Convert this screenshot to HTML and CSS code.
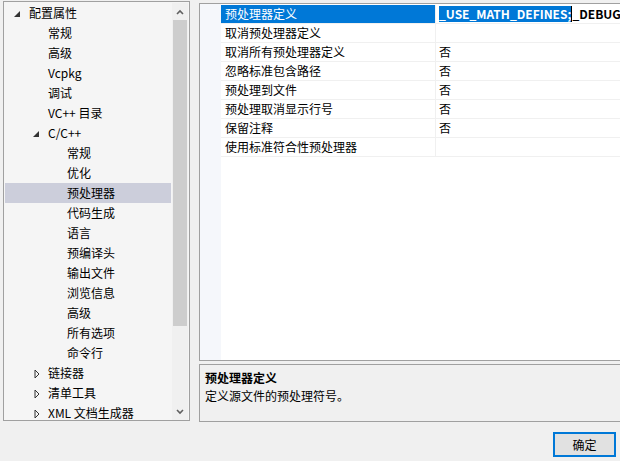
FILE: index.html
```html
<!DOCTYPE html>
<html lang="zh-CN">
<head>
<meta charset="utf-8">
<link rel="stylesheet" href="styles.css">
</head>
<body>
<div class="window">
  <div class="main">
    <div class="tree">
      <div class="tree-list">
        <div class="row l1"><span class="tw"><svg width="6" height="6" viewBox="0 0 6 6"><polygon points="6,0 6,6 0,6" fill="#333"/></svg></span><span class="tx">配置属性</span></div>
        <div class="row l2"><span class="tw"></span><span class="tx">常规</span></div>
        <div class="row l2"><span class="tw"></span><span class="tx">高级</span></div>
        <div class="row l2"><span class="tw"></span><span class="tx">Vcpkg</span></div>
        <div class="row l2"><span class="tw"></span><span class="tx">调试</span></div>
        <div class="row l2"><span class="tw"></span><span class="tx">VC++ 目录</span></div>
        <div class="row l2"><span class="tw"><svg width="6" height="6" viewBox="0 0 6 6"><polygon points="6,0 6,6 0,6" fill="#333"/></svg></span><span class="tx">C/C++</span></div>
        <div class="row l3"><span class="tw"></span><span class="tx">常规</span></div>
        <div class="row l3"><span class="tw"></span><span class="tx">优化</span></div>
        <div class="row l3 sel"><span class="tw"></span><span class="tx">预处理器</span></div>
        <div class="row l3"><span class="tw"></span><span class="tx">代码生成</span></div>
        <div class="row l3"><span class="tw"></span><span class="tx">语言</span></div>
        <div class="row l3"><span class="tw"></span><span class="tx">预编译头</span></div>
        <div class="row l3"><span class="tw"></span><span class="tx">输出文件</span></div>
        <div class="row l3"><span class="tw"></span><span class="tx">浏览信息</span></div>
        <div class="row l3"><span class="tw"></span><span class="tx">高级</span></div>
        <div class="row l3"><span class="tw"></span><span class="tx">所有选项</span></div>
        <div class="row l3"><span class="tw"></span><span class="tx">命令行</span></div>
        <div class="row l2"><span class="tw"><svg class="closed" width="6" height="10" viewBox="0 0 6 10"><polygon points="1,1 5,5 1,9" fill="none" stroke="#333" stroke-width="1"/></svg></span><span class="tx">链接器</span></div>
        <div class="row l2"><span class="tw"><svg class="closed" width="6" height="10" viewBox="0 0 6 10"><polygon points="1,1 5,5 1,9" fill="none" stroke="#333" stroke-width="1"/></svg></span><span class="tx">清单工具</span></div>
        <div class="row l2"><span class="tw"><svg class="closed" width="6" height="10" viewBox="0 0 6 10"><polygon points="1,1 5,5 1,9" fill="none" stroke="#333" stroke-width="1"/></svg></span><span class="tx">XML 文档生成器</span></div>
      </div>
      <div class="vscroll">
        <div class="sb-btn"><svg width="8" height="6" viewBox="0 0 8 6"><polyline points="1,5 4,2 7,5" fill="none" stroke="#606060" stroke-width="1.6"/></svg></div>
        <div class="sb-track"><div class="sb-thumb"></div></div>
        <div class="sb-btn"><svg width="8" height="6" viewBox="0 0 8 6"><polyline points="1,1 4,4 7,1" fill="none" stroke="#606060" stroke-width="1.6"/></svg></div>
      </div>
    </div>
    <div class="right">
      <div class="grid">
        <div class="gutter"></div>
        <div class="props">
          <div class="prow active"><div class="pname">预处理器定义</div><div class="pval"><span class="edit"><span class="selx">_USE_MATH_DEFINES;</span><span class="caret"></span>_DEBUG;%(PreprocessorDefinitions)</span></div></div>
          <div class="prow"><div class="pname">取消预处理器定义</div><div class="pval"></div></div>
          <div class="prow"><div class="pname">取消所有预处理器定义</div><div class="pval">否</div></div>
          <div class="prow"><div class="pname">忽略标准包含路径</div><div class="pval">否</div></div>
          <div class="prow"><div class="pname">预处理到文件</div><div class="pval">否</div></div>
          <div class="prow"><div class="pname">预处理取消显示行号</div><div class="pval">否</div></div>
          <div class="prow"><div class="pname">保留注释</div><div class="pval">否</div></div>
          <div class="prow"><div class="pname">使用标准符合性预处理器</div><div class="pval"></div></div>
        </div>
      </div>
      <div class="desc">
        <div class="desc-title">预处理器定义</div>
        <div class="desc-text">定义源文件的预处理符号。</div>
      </div>
    </div>
  </div>
  <div class="footer">
    <button class="btn">确定</button>
  </div>
</div>
</body>
</html>
```
FILE: styles.css
```css
* { box-sizing: border-box; }
html, body { margin: 0; padding: 0; }
body {
  width: 620px;
  height: 461px;
  overflow: hidden;
  background: #f0f0f0;
  font-family: "Noto Sans CJK SC", sans-serif;
  font-size: 12px;
  color: #000;
}
.window { width: 620px; height: 461px; overflow: hidden; }
.main {
  display: flex;
  padding: 1px 0 0 3px;
  height: 422px;
}
.tree {
  width: 187px;
  height: 420px;
  border: 1px solid #a0a0a0;
  background: #f5f5f5;
  display: flex;
  padding: 1px 2px 0 1px;
  overflow: hidden;
  flex: none;
}
.tree-list {
  width: 166px;
  height: 417px;
  overflow: hidden;
  flex: none;
}
.row {
  height: 20px;
  display: flex;
  align-items: center;
  white-space: nowrap;
}
.row.l1 { padding-left: 9px; }
.row.l2 { padding-left: 28px; }
.row.l3 { padding-left: 47px; }
.row.sel { background: #cccedb; }
.tw {
  width: 15px;
  height: 20px;
  flex: none;
  position: relative;
}
.tw svg { position: absolute; left: 0; top: 8px; }
.tw svg.closed { left: 1px; top: 6px; }
.tx { line-height: 20px; }
.vscroll {
  width: 16px;
  height: 417px;
  margin-left: 1px;
  background: #f0f0f0;
  display: flex;
  flex-direction: column;
  flex: none;
}
.sb-btn {
  height: 17px;
  display: flex;
  align-items: center;
  justify-content: center;
  flex: none;
}
.sb-track { flex: 1; }
.sb-thumb {
  height: 306px;
  background: #cdcdcd;
  margin: 0 1px;
}
.right {
  margin-left: 9px;
  padding-top: 2px;
  display: flex;
  flex-direction: column;
  width: 440px;
  flex: none;
}
.grid {
  height: 358px;
  border: 1px solid #a0a0a0;
  border-right: none;
  background: #fff;
  display: flex;
  padding-top: 1px;
}
.gutter {
  width: 21px;
  background: #f5f7fb;
  flex: none;
  margin-top: -1px;
}
.props { flex: 1; }
.prow {
  height: 19px;
  display: flex;
  border-bottom: 1px solid #f0f0f0;
  white-space: nowrap;
}
.pname {
  width: 215px;
  flex: none;
  padding-left: 4px;
  line-height: 18px;
  border-right: 1px solid #f0f0f0;
}
.pval {
  flex: 1;
  padding-left: 3px;
  line-height: 18px;
  overflow: hidden;
}
.prow.active .pname { background: #0078d7; color: #fff; }
.edit { font-weight: bold; display: inline-flex; align-items: center; height: 18px; }
.selx { background: #0078d7; color: #fff; line-height: 16px; }
.caret { width: 1px; height: 16px; background: #000; }
.desc {
  margin-top: 3px;
  height: 58px;
  border: 1px solid #a0a0a0;
  border-right: none;
  background: #f0f0f0;
  padding: 4px 0 0 5px;
}
.desc-title { font-weight: bold; line-height: 18px; }
.desc-text { line-height: 18px; }
.footer {
  display: flex;
  justify-content: flex-end;
  padding: 10px 4px 0 0;
}
.btn {
  width: 63px;
  height: 25px;
  border: 2px solid #0078d7;
  background: #e1e1e1;
  font-family: "Noto Sans CJK SC", sans-serif;
  font-size: 12px;
  color: #000;
  padding: 0;
  margin: 0;
}
```
